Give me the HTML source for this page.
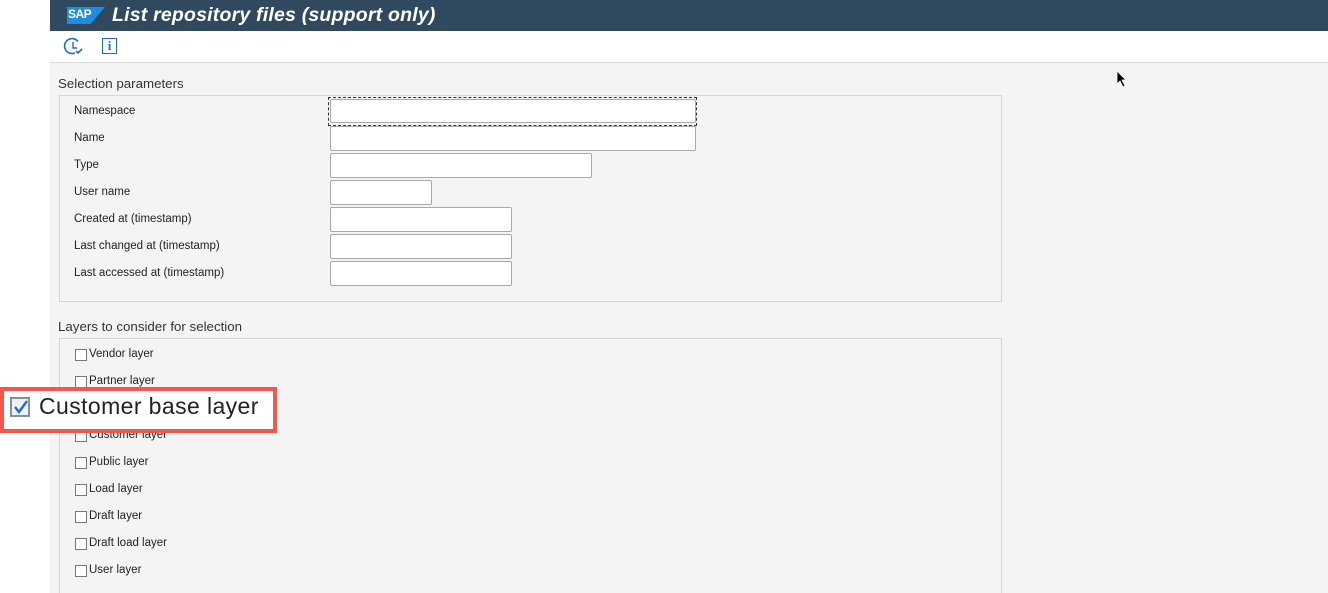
<!DOCTYPE html><html><head><style>
html,body{margin:0;width:1328px;height:593px;overflow:hidden}
body{background:#fff;font-family:"Liberation Sans",sans-serif;position:relative}
.a{position:absolute}
.hdr{left:50px;top:0;width:1278px;height:31px;background:#30495f}
.tb{left:50px;top:31px;width:1278px;height:31px;background:#fff;border-bottom:1px solid #d9d9d9}
.ct{left:50px;top:63px;width:1278px;height:530px;background:#f4f4f4}
.box{border:1px solid #d6d6d6}
.lbl{font-size:11.5px;color:#222}
.in{background:#fff;border:1px solid #a9a9a9;border-radius:2px;height:23px}
.cb{width:10px;height:10px;border:1px solid #777;background:#fff}
.ttl{font-size:13.3px;color:#333}
</style></head><body>
<div class="a hdr"></div>
<div class="a" style="left:67px;top:7px;width:38px;height:17px;background:#1a8ee0;clip-path:polygon(0 0,100% 0,62% 100%,0 100%)"></div>
<div class="a" style="left:68px;top:7px;font-size:12px;font-weight:bold;color:#fff;letter-spacing:-0.5px">SAP</div>
<div class="a" style="left:112px;top:4px;font-size:19.5px;font-style:italic;font-weight:bold;color:#fff;letter-spacing:0.2px">List repository files (support only)</div>
<div class="a tb"></div>
<svg class="a" style="left:63px;top:37px" width="22" height="20" viewBox="0 0 22 20"><path d="M15 4.5A7.5 7.5 0 1 0 12 16" fill="none" stroke="#1b6fc2" stroke-width="1.6"/><path d="M10 5v6h4" fill="none" stroke="#1b6fc2" stroke-width="1.4"/><path d="M13 14l2 2 4-4" fill="none" stroke="#1b6fc2" stroke-width="1.6"/></svg>
<div class="a" style="left:102px;top:38px;width:15px;height:16px;border:1.5px solid #1b6fc2;box-sizing:border-box;color:#1b6fc2;font:bold 13px 'Liberation Serif',serif;text-align:center;line-height:14px">i</div>
<div class="a ct"></div>
<svg class="a" style="left:1116px;top:70px" width="12" height="18" viewBox="0 0 12 18"><path d="M1 1v13l3-3 3 6 2-1-3-6h4z" fill="#000" stroke="#fff" stroke-width="0.8"/></svg>
<div class="a ttl" style="left:58px;top:76px">Selection parameters</div>
<div class="a box" style="left:59px;top:95px;width:941px;height:205px"></div>
<div class="a lbl" style="left:74px;top:105px">Namespace</div>
<div class="a lbl" style="left:74px;top:132px">Name</div>
<div class="a lbl" style="left:74px;top:159px">Type</div>
<div class="a lbl" style="left:74px;top:186px">User name</div>
<div class="a lbl" style="left:74px;top:213px">Created at (timestamp)</div>
<div class="a lbl" style="left:74px;top:240px">Last changed at (timestamp)</div>
<div class="a lbl" style="left:74px;top:267px">Last accessed at (timestamp)</div>
<div class="a" style="left:328px;top:97px;width:367px;height:27px;border:1px dashed #333"></div>
<div class="a in" style="left:330px;top:99px;width:364px;height:22px"></div>
<div class="a in" style="left:330px;top:126px;width:364px"></div>
<div class="a in" style="left:330px;top:153px;width:260px"></div>
<div class="a in" style="left:330px;top:180px;width:100px"></div>
<div class="a in" style="left:330px;top:207px;width:180px"></div>
<div class="a in" style="left:330px;top:234px;width:180px"></div>
<div class="a in" style="left:330px;top:261px;width:180px"></div>
<div class="a ttl" style="left:58px;top:319px">Layers to consider for selection</div>
<div class="a box" style="left:59px;top:338px;width:941px;height:260px"></div>
<div class="a cb" style="left:75px;top:349px"></div><div class="a lbl" style="left:89px;top:348px">Vendor layer</div>
<div class="a cb" style="left:75px;top:376px"></div><div class="a lbl" style="left:89px;top:375px">Partner layer</div>
<div class="a cb" style="left:75px;top:430px"></div><div class="a lbl" style="left:89px;top:429px">Customer layer</div>
<div class="a cb" style="left:75px;top:457px"></div><div class="a lbl" style="left:89px;top:456px">Public layer</div>
<div class="a cb" style="left:75px;top:484px"></div><div class="a lbl" style="left:89px;top:483px">Load layer</div>
<div class="a cb" style="left:75px;top:511px"></div><div class="a lbl" style="left:89px;top:510px">Draft layer</div>
<div class="a cb" style="left:75px;top:538px"></div><div class="a lbl" style="left:89px;top:537px">Draft load layer</div>
<div class="a cb" style="left:75px;top:565px"></div><div class="a lbl" style="left:89px;top:564px">User layer</div>
<div class="a" style="left:0;top:387px;width:269px;height:38px;border:4px solid #f2594b;background:#fff"></div>
<div class="a" style="left:10px;top:397px;width:20px;height:20px;border:2px solid #8a8f96;background:#eef2f7;box-sizing:border-box"></div>
<svg class="a" style="left:12px;top:398px" width="18" height="18" viewBox="0 0 18 18"><path d="M3 9l4 5 8-11" fill="none" stroke="#1c6fd0" stroke-width="2.4"/></svg>
<div class="a" style="left:39px;top:393px;font-size:23px;color:#222;letter-spacing:0.4px">Customer base layer</div>
</body></html>
